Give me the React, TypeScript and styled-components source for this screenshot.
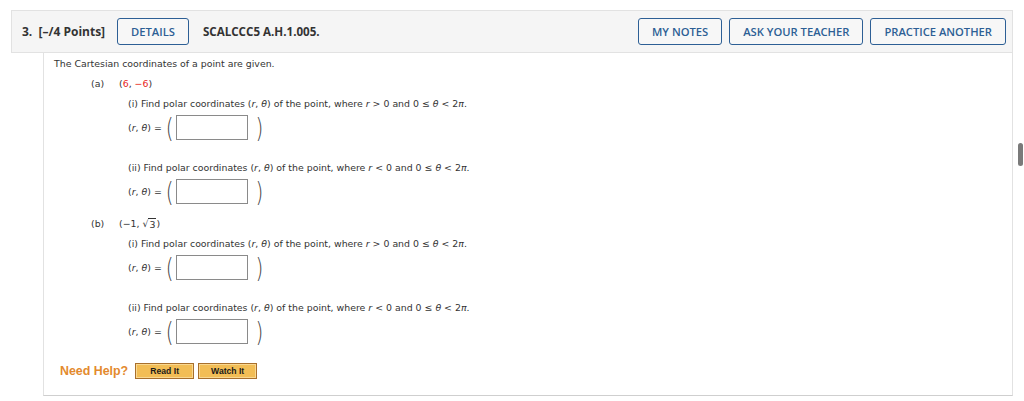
import React from 'react';
import styled, { createGlobalStyle } from 'styled-components';

const GlobalStyle = createGlobalStyle`
  html, body {
    margin: 0;
    padding: 0;
    background: #ffffff;
  }
  body {
    font-family: 'Open Sans', 'Liberation Sans', sans-serif;
    color: #333;
  }
`;

const Page = styled.div`
  position: relative;
  width: 1024px;
  height: 401px;
  overflow: hidden;
  padding-top: 10px;
  box-sizing: border-box;
`;

const QuestionBox = styled.div`
  margin-left: 11px;
  width: 1002px;
`;

const HeaderBar = styled.div`
  height: 43px;
  box-sizing: border-box;
  background: #f5f5f5;
  border: 1px solid #e2e2e2;
  display: flex;
  align-items: center;
  padding: 0 6px 0 10px;
`;

const QuestionNumber = styled.span`
  font-size: 12px;
  font-weight: 700;
  color: #333;
  margin-right: 12px;
  white-space: nowrap;
`;

const QuestionCode = styled.span`
  font-size: 11.6px;
  font-weight: 700;
  color: #333;
  margin-left: 14px;
`;

const HeaderButton = styled.button<{ $gap?: number }>`
  height: 27px;
  box-sizing: border-box;
  border: 1px solid #2d5f95;
  border-radius: 3px;
  background: #f7f7f7;
  color: #2d5f95;
  font-family: 'Open Sans', 'Liberation Sans', sans-serif;
  font-size: 11.2px;
  font-weight: 600;
  padding: 0 13px;
  margin-left: ${({ $gap }) => ($gap ?? 0)}px;
  white-space: nowrap;
  cursor: pointer;
`;

const Spacer = styled.div`
  flex: 1;
`;

const Body = styled.div`
  margin-left: 32px;
  height: 343px;
  box-sizing: border-box;
  border-left: 1px solid #e2e2e2;
  border-right: 1px solid #e2e2e2;
  border-bottom: 1px solid #cfcfcf;
  padding: 5px 0 0 10px;
  font-family: 'DejaVu Sans', Verdana, sans-serif;
  font-size: 9.4px;
  color: #333;
`;

const Line = styled.div<{ $top: number; $indent?: number }>`
  height: 12px;
  line-height: 12px;
  margin-top: ${({ $top }) => $top}px;
  padding-left: ${({ $indent }) => $indent ?? 0}px;
  display: flex;
  align-items: center;
  white-space: nowrap;
`;

const PartLabel = styled.span`
  width: 28px;
`;

const Red = styled.span`
  color: #e8261c;
`;

const Var = styled.i`
  font-style: italic;
`;

const Sqrt = styled.span`
  display: inline-flex;
  align-items: flex-end;
`;

const SqrtRadicand = styled.span`
  border-top: 1px solid #333;
  padding: 0 1px;
  line-height: 11px;
`;

const AnswerRow = styled.div`
  margin-top: 5px;
  padding-left: 74px;
  height: 25px;
  display: flex;
  align-items: center;
`;

const Paren = styled.span<{ $side: 'l' | 'r' }>`
  display: inline-block;
  font-family: 'DejaVu Sans', sans-serif;
  font-weight: 200;
  font-size: 20px;
  line-height: 20px;
  transform: scaleY(1.35);
  color: #444;
  margin: ${({ $side }) => ($side === 'l' ? '0 2px 0 4px' : '0 0 0 8px')};
`;

const AnswerInput = styled.div`
  width: 72px;
  height: 25px;
  box-sizing: border-box;
  border: 1px solid #8a8a8a;
  background: #fff;
`;

const HelpRow = styled.div`
  margin-top: 19px;
  padding-left: 6px;
  display: flex;
  align-items: center;
  height: 16px;
`;

const HelpText = styled.span`
  font-family: 'Liberation Sans', Arial, sans-serif;
  font-weight: 700;
  font-size: 12.4px;
  color: #e38a2e;
  margin-right: 7px;
`;

const HelpButton = styled.span`
  width: 59px;
  height: 16px;
  box-sizing: border-box;
  border: 1px solid #a86f2c;
  background: #f2bd55;
  box-shadow: inset 0 0 0 1px #f9d891;
  display: flex;
  align-items: center;
  justify-content: center;
  font-family: 'Liberation Sans', Arial, sans-serif;
  font-weight: 700;
  font-size: 8.6px;
  color: #1a1a1a;
  margin-right: 4px;
`;

const ScrollThumb = styled.div`
  position: absolute;
  left: 1018px;
  top: 143px;
  width: 5px;
  height: 23px;
  border-radius: 3px;
  background: #7a7a7a;
`;

const PolarQuestion: React.FC<{ sign: '>' | '<'; roman: string; top: number }> = ({ sign, roman, top }) => (
  <>
    <Line $top={top} $indent={74}>
      ({roman}) Find polar coordinates (<Var>r</Var>,&nbsp;<Var>θ</Var>) of the point, where&nbsp;<Var>r</Var>&nbsp;
      {sign} 0 and 0 ≤ <Var>&nbsp;θ</Var>&nbsp;&lt; 2<Var>π</Var>.
    </Line>
    <AnswerRow>
      (<Var>r</Var>,&nbsp;<Var>θ</Var>) =
      <Paren $side="l">(</Paren>
      <AnswerInput />
      <Paren $side="r">)</Paren>
    </AnswerRow>
  </>
);

export default function App() {
  return (
    <Page>
      <GlobalStyle />
      <QuestionBox>
        <HeaderBar>
          <QuestionNumber>3.&nbsp; [–/4 Points]</QuestionNumber>
          <HeaderButton>DETAILS</HeaderButton>
          <QuestionCode>SCALCCC5 A.H.1.005.</QuestionCode>
          <Spacer />
          <HeaderButton>MY NOTES</HeaderButton>
          <HeaderButton $gap={7}>ASK YOUR TEACHER</HeaderButton>
          <HeaderButton $gap={7}>PRACTICE ANOTHER</HeaderButton>
        </HeaderBar>
        <Body>
          <Line $top={0}>The Cartesian coordinates of a point are given.</Line>
          <Line $top={8} $indent={37}>
            <PartLabel>(a)</PartLabel>
            (<Red>6</Red>,&nbsp;<Red>−6</Red>)
          </Line>
          <PolarQuestion roman="i" sign=">" top={8} />
          <PolarQuestion roman="ii" sign="<" top={22} />
          <Line $top={14} $indent={37}>
            <PartLabel>(b)</PartLabel>
            (−1,&nbsp;
            <Sqrt>
              √<SqrtRadicand>3</SqrtRadicand>
            </Sqrt>
            )
          </Line>
          <PolarQuestion roman="i" sign=">" top={8} />
          <PolarQuestion roman="ii" sign="<" top={22} />
          <HelpRow>
            <HelpText>Need Help?</HelpText>
            <HelpButton>Read It</HelpButton>
            <HelpButton>Watch It</HelpButton>
          </HelpRow>
        </Body>
      </QuestionBox>
      <ScrollThumb />
    </Page>
  );
}
